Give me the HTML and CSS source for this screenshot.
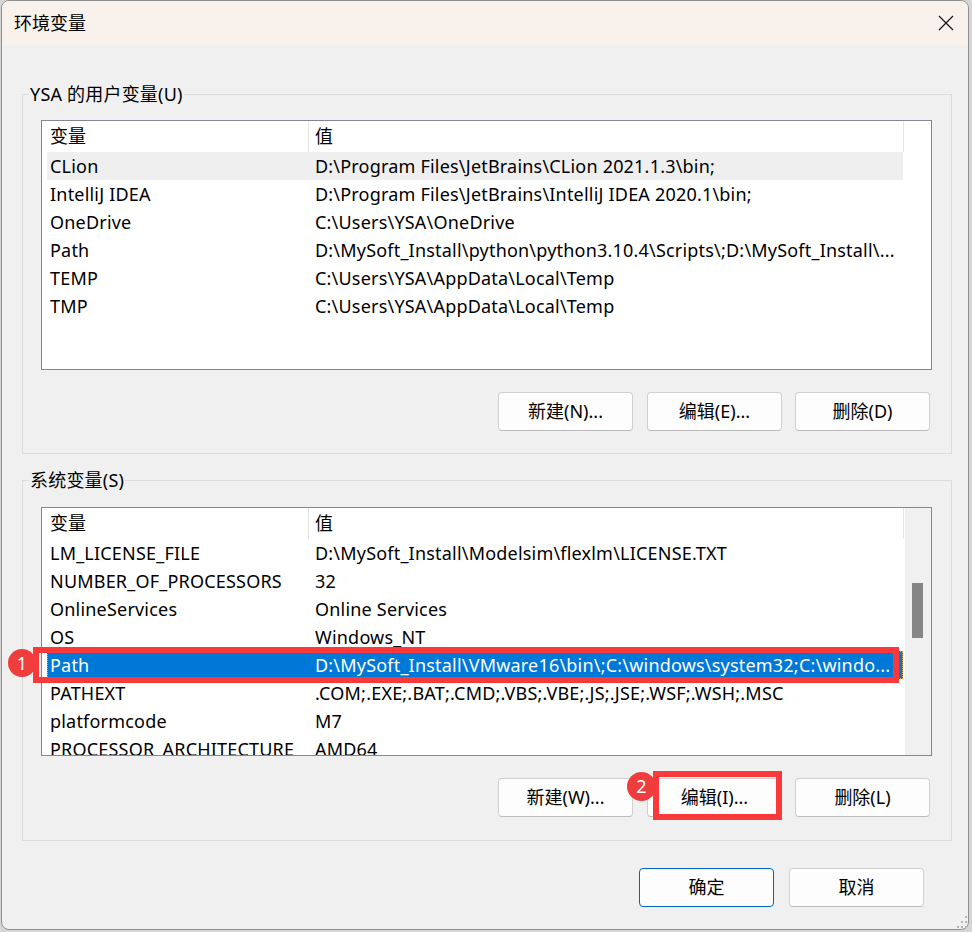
FILE: index.html
```html
<!DOCTYPE html>
<html lang="zh-CN">
<head>
<meta charset="utf-8">
<title>环境变量</title>
<link rel="stylesheet" href="styles.css">
</head>
<body>
<div class="window">
  <div class="titlebar">
    <span class="title">环境变量</span>
    <svg class="close" width="16" height="16" viewBox="0 0 16 16"><path d="M1 1 L15 15 M15 1 L1 15" stroke="#1a1a1a" stroke-width="1.3" fill="none"/></svg>
  </div>

  <fieldset class="group group-user">
    <legend>YSA 的用户变量(U)</legend>
    <div class="list list-user">
      <div class="list-main">
        <div class="list-head">
          <div class="hcol hcol-name">变量</div>
          <div class="hcol hcol-value">值</div>
        </div>
        <div class="row hover"><span class="c1">CLion</span><span class="c2">D:\Program Files\JetBrains\CLion 2021.1.3\bin;</span></div>
        <div class="row"><span class="c1">IntelliJ IDEA</span><span class="c2">D:\Program Files\JetBrains\IntelliJ IDEA 2020.1\bin;</span></div>
        <div class="row"><span class="c1">OneDrive</span><span class="c2">C:\Users\YSA\OneDrive</span></div>
        <div class="row"><span class="c1">Path</span><span class="c2">D:\MySoft_Install\python\python3.10.4\Scripts\;D:\MySoft_Install\...</span></div>
        <div class="row"><span class="c1">TEMP</span><span class="c2">C:\Users\YSA\AppData\Local\Temp</span></div>
        <div class="row"><span class="c1">TMP</span><span class="c2">C:\Users\YSA\AppData\Local\Temp</span></div>
      </div>
    </div>
    <div class="btns">
      <button class="btn">新建(N)...</button>
      <button class="btn">编辑(E)...</button>
      <button class="btn">删除(D)</button>
    </div>
  </fieldset>

  <fieldset class="group group-sys">
    <legend>系统变量(S)</legend>
    <div class="list list-sys">
      <div class="list-main">
        <div class="list-head">
          <div class="hcol hcol-name">变量</div>
          <div class="hcol hcol-value">值</div>
        </div>
        <div class="row"><span class="c1">LM_LICENSE_FILE</span><span class="c2">D:\MySoft_Install\Modelsim\flexlm\LICENSE.TXT</span></div>
        <div class="row"><span class="c1">NUMBER_OF_PROCESSORS</span><span class="c2">32</span></div>
        <div class="row"><span class="c1">OnlineServices</span><span class="c2">Online Services</span></div>
        <div class="row"><span class="c1">OS</span><span class="c2">Windows_NT</span></div>
        <div class="row selected"><span class="c1">Path</span><span class="c2">D:\MySoft_Install\VMware16\bin\;C:\windows\system32;C:\windo...</span></div>
        <div class="row"><span class="c1">PATHEXT</span><span class="c2">.COM;.EXE;.BAT;.CMD;.VBS;.VBE;.JS;.JSE;.WSF;.WSH;.MSC</span></div>
        <div class="row"><span class="c1">platformcode</span><span class="c2">M7</span></div>
        <div class="row"><span class="c1">PROCESSOR_ARCHITECTURE</span><span class="c2">AMD64</span></div>
      </div>
      <div class="scrollbar"><div class="thumb"></div></div>
    </div>
    <div class="btns">
      <button class="btn">新建(W)...</button>
      <button class="btn">编辑(I)...</button>
      <button class="btn">删除(L)</button>
    </div>
  </fieldset>

  <div class="dialog-btns">
    <button class="btn btn-default">确定</button>
    <button class="btn">取消</button>
  </div>

  <div class="mark mark-row"></div>
  <div class="badge badge-1">1</div>
  <div class="mark mark-btn"></div>
  <div class="badge badge-2">2</div>
  <svg class="grip" width="14" height="14" viewBox="0 0 14 14">
    <rect x="11" y="1" width="2" height="2" fill="#b4b4b4"/>
    <rect x="7" y="6" width="2" height="2" fill="#b4b4b4"/>
    <rect x="11" y="6" width="2" height="2" fill="#b4b4b4"/>
    <rect x="3" y="11" width="2" height="2" fill="#b4b4b4"/>
    <rect x="7" y="11" width="2" height="2" fill="#b4b4b4"/>
    <rect x="11" y="11" width="2" height="2" fill="#b4b4b4"/>
  </svg>
</div>
</body>
</html>
```

FILE: styles.css
```css
* { box-sizing: border-box; }
html, body { margin: 0; padding: 0; }
body {
  background: #d6d6d6;
  font-family: "Noto Sans", "Noto Sans CJK SC", sans-serif;
  font-size: 18px;
  letter-spacing: 0.2px;
  color: #000;
}
.window {
  position: relative;
  margin: 0 0 0 1px;
  width: 968px;
  height: 930px;
  border: 1px solid #8f8f8f;
  border-radius: 8px;
  background: #f0f0f0;
  overflow: hidden;
}
.titlebar {
  height: 44px;
  background: #f9f1eb;
  display: flex;
  align-items: center;
  justify-content: space-between;
  padding: 0 14px 0 12px;
}
.title { font-size: 18px; line-height: 24px; letter-spacing: 0; }
.close { display: block; }

.group {
  margin: 0 16px 0 20px;
  border: 1px solid #dcdcdc;
  min-width: 0;
}
.group-user { margin-top: 37px; padding: 14px 0 22px 0; }
.group-sys { margin-top: 14px; padding: 15px 0 23px 0; }
.group legend {
  margin-left: 6px;
  padding: 0 1px;
  line-height: 24px;
  font-size: 18px;
}

.list {
  margin-left: 18px;
  width: 891px;
  border: 1px solid #828790;
  background: #fff;
  display: flex;
  overflow: hidden;
}
.list-user { height: 250px; }
.list-sys { height: 249px; }
.list-main { width: 863px; flex: none; }
.list-user .list-main { width: 889px; }
.list-head {
  display: flex;
  height: 31px;
  line-height: 31px;
  width: 862px;
}
.hcol { white-space: nowrap; letter-spacing: 0; }
.hcol-name { width: 267px; padding-left: 8px; border-right: 1px solid #e5e5e5; }
.hcol-value { width: 595px; padding-left: 6px; border-right: 1px solid #e5e5e5; }

.row {
  display: grid;
  grid-template-columns: 261px 595px;
  width: 856px;
  margin-left: 5px;
  height: 28px;
  line-height: 28px;
  white-space: nowrap;
}
.row .c1 { padding-left: 3px; overflow: hidden; }
.row .c2 { padding-left: 7px; overflow: hidden; }
.row.hover { background: #efefef; }
.row.selected { background: #0078d7; color: #fff; outline: 1px dotted #e3a44c; outline-offset: -1px; }

.scrollbar {
  width: 26px;
  flex: none;
  background: #f0f0f0;
  padding: 75px 0 0 7px;
}
.thumb { width: 11px; height: 55px; background: #858585; }

.btns {
  display: flex;
  gap: 13px;
  margin: 22px 0 0 475px;
}
.btn {
  width: 135px;
  height: 39px;
  border: 1px solid #d0d0d0;
  border-bottom-color: #bcbcbc;
  border-radius: 4px;
  background: #fdfdfd;
  font-family: inherit;
  font-size: 18px;
  letter-spacing: 0;
  color: #000;
  padding: 0;
  line-height: 37px;
}
.btns .btn:first-child { margin-right: 1px; }
.btn-default { border-color: #0067c0; }
.dialog-btns {
  display: flex;
  justify-content: flex-end;
  gap: 15px;
  margin: 27px 44px 0 0;
}

.mark {
  position: absolute;
  border: 6px solid #fa3a3a;
}
.mark-row { left: 31px; top: 646px; width: 866px; height: 36px; }
.mark-btn { left: 651px; top: 770px; width: 129px; height: 49px; }
.badge {
  position: absolute;
  width: 28px;
  height: 28px;
  border-radius: 50%;
  background: #ef3d3d;
  color: #fff;
  font-size: 18px;
  letter-spacing: 0;
  line-height: 28px;
  text-align: center;
}
.badge-1 { left: 6px; top: 648px; }
.badge-2 { left: 625px; top: 771px; width: 29px; height: 29px; line-height: 29px; }
.grip { position: absolute; right: 0; bottom: 0; }
```
